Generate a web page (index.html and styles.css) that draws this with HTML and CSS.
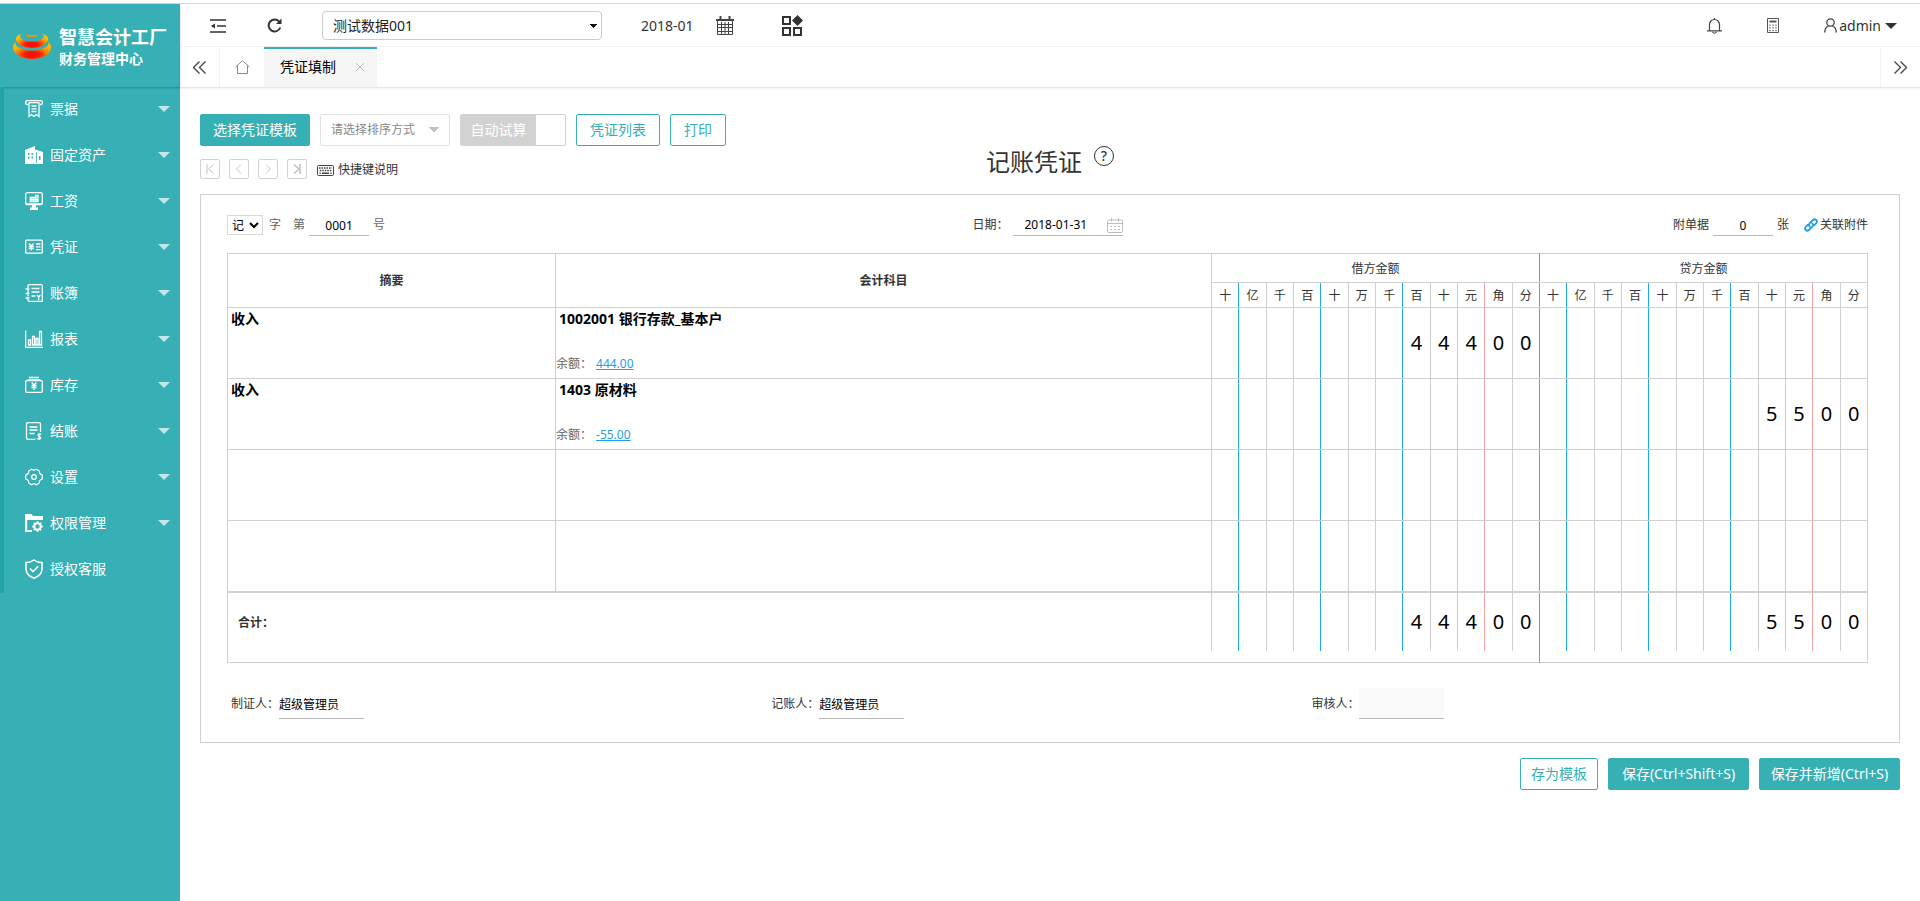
FILE: index.html
```html
<!DOCTYPE html>
<html lang="zh-CN">
<head>
<meta charset="utf-8">
<title>凭证填制</title>
<link rel="stylesheet" href="styles.css">
</head>
<body>
<div class="app">
  <aside class="sidebar">
    <div class="brand">
      <svg class="brand-mark" viewBox="0 0 38 26" aria-hidden="true">
        <defs>
          <radialGradient id="flame" cx="50%" cy="75%" r="55%">
            <stop offset="0" stop-color="#ff0800"/>
            <stop offset=".35" stop-color="#fa1606"/>
            <stop offset=".7" stop-color="#ff7400"/>
            <stop offset="1" stop-color="#ffb400"/>
          </radialGradient>
        </defs>
        <path fill="url(#flame)" d="M9 1C4 2 2 4 3 7c2 5 8 8 16 8s14-3 16-8c1-3-1-5-6-6 2 2 3 3 0 5-2 2-6 2.500-10 2.500S11 8 9 6C6 4 7 3 9 1z"/>
        <path fill="url(#flame)" d="M3 9c-3 2-4 5-2 9 3 5 10 8 18 8s15-3 18-8c2-4 1-7-2-9 1 4-1 5-4 6-3 2-8 2.500-12 2.500S10 17 7 15c-3-1-5-2-4-6z"/>
        <path fill="#ff8a10" d="M13 1c1 1 3 1 6 1s5 0 6-1v1.500c-1 1-3 1.500-6 1.500s-5-.5-6-1.500z"/>
      </svg>
      <div class="brand-text"><strong class="brand-name">智慧会计工厂</strong><span class="brand-sub">财务管理中心</span></div>
    </div>
    <nav class="menu">
      <a class="menu-item" href="#"><svg class="menu-icon" viewBox="0 0 18 18"><path d="M3 4.500H2Q.7 4.500.7 3V2Q.7.700 2 .700h14q1.300 0 1.300 1.300v1q0 1.500-1.300 1.500h-1M3.500 2.700h11M4 3v13.500l2.500-2 2.500 2 2.500-2 2.500 2V3M6.500 6h5M6.500 8.800h5M6.500 11.500h5"/></svg><span>票据</span><i class="caret"></i></a>
      <a class="menu-item" href="#"><svg class="menu-icon" viewBox="0 0 18 18"><path class="solid" fill-rule="evenodd" d="M0 4L10 0v3.500L18 6v12H0zM3 7v2h1.500V7zm3.500 0v2H8V7zM3 10.500v2h1.500v-2zm3.500 0v2H8v-2zM11 6v11h.8V6zm3 4v4h1.500v-4z"/></svg><span>固定资产</span><i class="caret"></i></a>
      <a class="menu-item" href="#"><svg class="menu-icon" viewBox="0 0 18 18"><rect x=".7" y=".7" width="16.600" height="12" rx="1.500"/><path d="M1 12h16M4.500 9.500h9M4.500 7.500h9M4.500 5.500h7M6 5v5M8.500 5v5M11 3v7M10 3.500h3v6"/><path class="solid" d="M7 13h4v2.500h2V18H5v-2.500h2z"/></svg><span>工资</span><i class="caret"></i></a>
      <a class="menu-item" href="#"><svg class="menu-icon" viewBox="0 0 18 18"><rect x=".7" y="2.200" width="16.600" height="13" rx="1"/><path d="M4 5.500L6.200 8 8.500 5.500M3.800 8.500h5M3.800 10.500h5M6.200 8v4.500M11 6h4.500M11 8.800h4.500M11 11.700h4.500"/></svg><span>凭证</span><i class="caret"></i></a>
      <a class="menu-item" href="#"><svg class="menu-icon" viewBox="0 0 18 18"><path d="M3 4V2.200Q3 .700 4.500.700H16q1.300 0 1.300 1.500V17.300H4.500Q3 17.300 3 16v-1M3 6v3M3 10.500v2M.5 5h4M.5 9.500h4M.5 14h4M6.500 4.500h8M6.500 8h8M6.500 12h4M12 11l1.700 2 1.700-2M13.700 13v3"/></svg><span>账簿</span><i class="caret"></i></a>
      <a class="menu-item" href="#"><svg class="menu-icon" viewBox="0 0 18 18"><path d="M.7.500v16.800H18M3.500 15v-5h2v5zM7.500 15V6.500h2V15zM11 15V8.500h2V15zM14.500 15V1.500h2V15z"/></svg><span>报表</span><i class="caret"></i></a>
      <a class="menu-item" href="#"><svg class="menu-icon" viewBox="0 0 18 18"><path d="M4 1.500h10M2.500 4h13"/><rect x=".7" y="4.700" width="16.600" height="11.600" rx="1"/><path d="M6.700 6.500L9 9l2.300-2.500M6.500 9.500h5M6.500 11.500h5M9 9v5"/></svg><span>库存</span><i class="caret"></i></a>
      <a class="menu-item" href="#"><svg class="menu-icon" viewBox="0 0 18 18"><path d="M10.500 17.300H3Q1.500 17.300 1.500 16V2Q1.500.700 3 .700h11Q15.500.700 15.500 2v8M4.500 5h8M4.500 8h8M4.500 11.500h5M16.300 12.500q-1-.8-2.300-.4c-1.500.6-.8 2 .4 2.400 1.800.6 1.700 2.600-.3 2.700q-1.300 0-2.100-.8M14.200 11v7"/></svg><span>结账</span><i class="caret"></i></a>
      <a class="menu-item" href="#"><svg class="menu-icon" viewBox="0 0 18 18"><path d="M6.500 1.200Q9 3 11.500 1.200L14.300 3Q14 6 17.300 7v4Q14 12 14.300 15l-2.800 1.800Q9 15 6.500 16.800L3.700 15Q4 12 .7 11V7Q4 6 3.700 3z"/><circle cx="9" cy="9" r="2.300"/></svg><span>设置</span><i class="caret"></i></a>
      <a class="menu-item" href="#"><svg class="menu-icon" viewBox="0 0 18 18"><path class="solid" d="M0 0h6.500L8 2h10v4H2.200v10H7v2H0z"/><circle cx="12.500" cy="12.500" r="3.200" stroke-width="2"/><path stroke-width="2" d="M12.500 7.300v2M12.500 15.700v2M7.300 12.500h2M15.700 12.500h2M8.900 8.900l1.400 1.400M16.100 8.900l-1.400 1.400M8.900 16.100l1.400-1.400M16.100 16.100l-1.400-1.400"/></svg><span>权限管理</span><i class="caret"></i></a>
      <a class="menu-item" href="#"><svg class="menu-icon menu-icon-tall" viewBox="0 0 18 20"><path stroke-width="1.600" d="M9 1Q12 3.500 17 3.500V10q0 6-8 9.200Q1 16 1 10V3.500Q6 3.500 9 1zM5 9.500l3 3.200 5.200-5.500"/></svg><span>授权客服</span></a>
    </nav>
  </aside>

  <div class="main">
    <header class="topbar">
      <button class="icon-btn top-fold" aria-label="收起菜单"><svg width="16" height="14" viewBox="0 0 16 14"><path fill="none" stroke="#333" stroke-width="1.600" d="M0 1h16M7 7h9M0 13h16M2 7h3"/><path fill="#333" d="M1 7l4-2.500v5z"/></svg></button>
      <button class="icon-btn top-refresh" aria-label="刷新"><svg width="15" height="15" viewBox="0 0 15 15"><path fill="none" stroke="#333" stroke-width="2" d="M12.500 4A6 6 0 1 0 13.300 9.500"/><path fill="#333" d="M14.500.500V6H9z"/></svg></button>
      <select class="book-select" aria-label="账套"><option>测试数据001</option></select>
      <span class="period">2018-01</span>
      <button class="icon-btn top-cal" aria-label="选择期间"><svg width="18" height="20" viewBox="0 0 18 20" fill="none" stroke="#444"><path stroke-width="2" d="M0 4h18M4.500 0v5M13.500 0v5"/><path d="M1.500 4v14.500h15V4M5.500 6v12M9 6v12M12.500 6v12M2 8.500h14M2 11.500h14M2 15.500h14"/></svg></button>
      <button class="icon-btn" aria-label="应用"><svg width="21" height="21" viewBox="0 0 21 21" fill="none" stroke="#333" stroke-width="2"><path d="M1 2h7v7H1zM1 13h7v7H1zM12 13h7v7h-7z"/><path fill="#333" stroke="none" d="M15.500 0L21 5.500 15.500 11 10 5.500z"/></svg></button>
      <div class="top-right">
        <button class="icon-btn" aria-label="通知"><svg width="15" height="16" viewBox="0 0 15 16" fill="none" stroke="#444" stroke-width="1.200"><path d="M2.500 12.500V6.500a5 5 0 0 1 10 0v6M0 12.800h15M5.500 14q2 2.500 4 0M7.500 0v1.500"/></svg></button>
        <button class="icon-btn" aria-label="计算器"><svg width="12" height="15" viewBox="0 0 12 15" fill="none" stroke="#555"><path d="M.5.500h11v14H.5z"/><path stroke-width="2" d="M2.500 3.500h7"/><path stroke-width="1.300" stroke-dasharray="1.300 1.400" d="M3 6.500v7M6 6.500v7M9 6.500v7"/></svg></button>
        <button class="user"><svg width="13" height="15" viewBox="0 0 13 15" fill="none" stroke="#444" stroke-width="1.300"><circle cx="6.500" cy="4.500" r="3.700"/><path d="M.7 14.500q0-5 4-6.500M12.300 14.500q0-5-4-6.500"/></svg><span>admin</span><i class="caret caret-dark"></i></button>
      </div>
    </header>

    <div class="tabs">
      <button class="tab-nav" aria-label="向左"><svg width="13" height="13" viewBox="0 0 13 13" fill="none" stroke="#444" stroke-width="1.300"><path d="M6.500.500l-6 6 6 6M12.500.500l-6 6 6 6"/></svg></button>
      <button class="tab-home" aria-label="首页"><svg width="15" height="14" viewBox="0 0 15 14" fill="none" stroke="#888"><path d="M.5 7l7-6.300 7 6.300M2.500 5.500v8h10v-8"/></svg></button>
      <div class="tab"><span>凭证填制</span><button class="tab-close" aria-label="关闭"><svg width="8" height="8" viewBox="0 0 8 8" stroke="#bbb"><path d="M0 0l8 8M8 0L0 8"/></svg></button></div>
      <button class="tab-nav tab-nav-right" aria-label="向右"><svg width="13" height="13" viewBox="0 0 13 13" fill="none" stroke="#444" stroke-width="1.300"><path d="M.5.500l6 6-6 6M6.500.500l6 6-6 6"/></svg></button>
    </div>

    <main class="page">
      <div class="toolbar">
        <button class="btn btn-solid">选择凭证模板</button>
        <select class="sort-select" aria-label="排序方式"><option>请选择排序方式</option></select>
        <button class="switch" role="switch" aria-checked="false"><span>自动试算</span></button>
        <button class="btn">凭证列表</button>
        <button class="btn">打印</button>
      </div>

      <div class="heading">
        <div class="pager">
          <button class="page-btn" aria-label="第一张"><svg viewBox="0 0 10 10"><path d="M2 0v10M8.500.500L3.500 5l5 4.500"/></svg></button>
          <button class="page-btn" aria-label="上一张"><svg viewBox="0 0 10 10"><path d="M7 .500L2.500 5 7 9.500"/></svg></button>
          <button class="page-btn" aria-label="下一张"><svg viewBox="0 0 10 10"><path d="M3 .500L7.500 5 3 9.500"/></svg></button>
          <button class="page-btn" aria-label="最后一张"><svg viewBox="0 0 10 10"><path stroke-width="1.600" d="M8 0v10M2 .500L7 5 2 9.500"/></svg></button>
          <a class="shortcut" href="#"><svg width="17" height="11" viewBox="0 0 17 11" fill="none" stroke="#444"><rect x=".5" y=".5" width="16" height="10" rx="1"/><path stroke-dasharray="1.500 1" stroke-width="1.500" d="M2 3h13M2.800 5.500h12"/><path stroke-width="1.500" d="M5 8.200h7M2.500 8.200h1.200M13.300 8.200h1.200"/></svg>快捷键说明</a>
        </div>
        <h1 class="title">记账凭证<button class="help" aria-label="帮助">?</button></h1>
      </div>

      <section class="voucher">
        <div class="voucher-head">
          <div class="field-row">
            <select class="word-select" aria-label="凭证字"><option>记</option></select>
            <span class="gray word-label">字</span>
            <label class="gray" for="no">第</label>
            <input class="line-input number" id="no" value="0001">
            <span class="gray">号</span>
          </div>
          <div class="field-row">
            <label for="date">日期：</label>
            <span class="date-box"><input class="date-input" id="date" value="2018-01-31"><svg width="16" height="15" viewBox="0 0 16 15" fill="none" stroke="#bbb"><rect x=".5" y="2" width="15" height="12.500" rx="1.500"/><path d="M.5 5.500h15M4.500 0v3.500M11.500 0v3.500"/><path stroke-dasharray="2 2" d="M3 8.500h11M3 11.500h11"/></svg></span>
          </div>
          <div class="field-row field-right">
            <label for="att">附单据</label>
            <input class="line-input number" id="att" value="0">
            <span>张</span>
            <a class="attach" href="#"><svg width="14" height="14" viewBox="0 0 14 14" fill="none" stroke="#1e9fe8" stroke-width="1.800" stroke-linecap="round"><path d="M5.800 8.600q-1.600-1.700 0-3.400L9 2q1.700-1.500 3.200 0t0 3.200L10.300 7.200M8.200 5.400q1.600 1.700 0 3.400L5 12q-1.700 1.500-3.200 0t0-3.200L3.700 6.800"/></svg>关联附件</a>
          </div>
        </div>

        <table class="grid">
          <colgroup>
            <col class="c-summary"><col class="c-account">
            <col class="d b"><col class="d"><col class="d"><col class="d b"><col class="d"><col class="d"><col class="d b"><col class="d"><col class="d"><col class="d r"><col class="d"><col class="d g">
            <col class="d b"><col class="d"><col class="d"><col class="d b"><col class="d"><col class="d"><col class="d b"><col class="d"><col class="d"><col class="d r"><col class="d"><col class="d">
          </colgroup>
          <thead>
            <tr class="row-group"><th rowspan="2">摘要</th><th rowspan="2">会计科目</th><th class="thin" colspan="12">借方金额</th><th class="thin" colspan="12">贷方金额</th></tr>
            <tr class="row-units"><th>十</th><th>亿</th><th>千</th><th>百</th><th>十</th><th>万</th><th>千</th><th>百</th><th>十</th><th>元</th><th>角</th><th>分</th><th>十</th><th>亿</th><th>千</th><th>百</th><th>十</th><th>万</th><th>千</th><th>百</th><th>十</th><th>元</th><th>角</th><th>分</th></tr>
          </thead>
          <tbody>
            <tr class="entry"><td class="summary">收入</td><td class="account"><div class="account-box"><strong>1002001 银行存款_基本户</strong><span class="balance">余额：<a href="#">444.00</a></span></div></td><td></td><td></td><td></td><td></td><td></td><td></td><td></td><td>4</td><td>4</td><td>4</td><td>0</td><td>0</td><td></td><td></td><td></td><td></td><td></td><td></td><td></td><td></td><td></td><td></td><td></td><td></td></tr>
            <tr class="entry"><td class="summary">收入</td><td class="account"><div class="account-box"><strong>1403 原材料</strong><span class="balance">余额：<a href="#">-55.00</a></span></div></td><td></td><td></td><td></td><td></td><td></td><td></td><td></td><td></td><td></td><td></td><td></td><td></td><td></td><td></td><td></td><td></td><td></td><td></td><td></td><td></td><td>5</td><td>5</td><td>0</td><td>0</td></tr>
            <tr class="entry"><td></td><td></td><td></td><td></td><td></td><td></td><td></td><td></td><td></td><td></td><td></td><td></td><td></td><td></td><td></td><td></td><td></td><td></td><td></td><td></td><td></td><td></td><td></td><td></td><td></td><td></td></tr>
            <tr class="entry"><td></td><td></td><td></td><td></td><td></td><td></td><td></td><td></td><td></td><td></td><td></td><td></td><td></td><td></td><td></td><td></td><td></td><td></td><td></td><td></td><td></td><td></td><td></td><td></td><td></td><td></td></tr>
          </tbody>
          <tfoot>
            <tr class="total"><th colspan="2" scope="row">合计：</th><td></td><td></td><td></td><td></td><td></td><td></td><td></td><td>4</td><td>4</td><td>4</td><td>0</td><td>0</td><td></td><td></td><td></td><td></td><td></td><td></td><td></td><td></td><td>5</td><td>5</td><td>0</td><td>0</td></tr>
            <tr class="total-end"><td class="open" colspan="14"></td><td colspan="12"></td></tr>
          </tfoot>
        </table>

        <div class="signers">
          <div class="signer"><label for="maker">制证人：</label><input id="maker" class="sign-input" value="超级管理员"></div>
          <div class="signer"><label for="booker">记账人：</label><input id="booker" class="sign-input" value="超级管理员"></div>
          <div class="signer"><label for="auditor">审核人：</label><input id="auditor" class="sign-input sign-empty" disabled></div>
        </div>
      </section>

      <div class="actions">
        <button class="btn">存为模板</button>
        <button class="btn btn-solid btn-wide">保存(Ctrl+Shift+S)</button>
        <button class="btn btn-solid btn-wide">保存并新增(Ctrl+S)</button>
      </div>
    </main>
  </div>
</div>
</body>
</html>
```

FILE: styles.css
```css
:root {
  --teal: #36b0b4;
  --line: #d0d0d0;
}
* { box-sizing: border-box; }
body {
  margin: 0;
  font: 14px/20px "Noto Sans", "Noto Sans CJK SC", sans-serif;
  color: #333;
  background: #fff;
}
button, input, select { font: inherit; color: inherit; margin: 0; }
button { cursor: pointer; }
a { color: inherit; text-decoration: none; }
svg { display: block; flex: none; }

.app {
  display: flex;
  min-height: 100vh;
  padding-top: 3px;
  background: linear-gradient(#d8d8d8, #d8d8d8) 0 3px / 100% 1px no-repeat;
}

/* sidebar */
.sidebar { flex: none; width: 180px; margin-top: 1px; background: var(--teal); color: #fff; }
.brand {
  display: flex;
  align-items: center;
  gap: 8px;
  height: 83px;
  padding-left: 13px;
  box-shadow: 0 1px 2px rgba(0, 0, 0, .25);
}
.brand-mark { width: 38px; height: 26px; }
.brand-text { display: flex; flex-direction: column; padding-top: 2px; }
.brand-name { font-size: 18px; line-height: 24px; }
.brand-sub { font-weight: bold; line-height: 20px; }
.menu { border-left: 4px solid #20a2a6; }
.menu-item {
  display: flex;
  align-items: center;
  gap: 7px;
  height: 46px;
  padding: 0 10px 2px 21px;
}
.menu-icon { width: 18px; height: 18px; fill: none; stroke: #fff; stroke-width: 1.3; }
.menu-icon-tall { height: 20px; }
.menu-icon .solid { fill: #fff; stroke: none; }
.caret {
  margin-left: auto;
  border: 6px solid transparent;
  border-top-color: rgba(255, 255, 255, .7);
  border-bottom: 0;
}

/* top bar */
.main { flex: 1; min-width: 0; }
.topbar {
  display: flex;
  align-items: center;
  height: 44px;
  padding: 2px 23px 0 30px;
  border-bottom: 1px solid #f2f2f2;
}
.icon-btn { padding: 0; border: 0; background: none; }
.top-fold { margin-right: 41px; }
.top-refresh { margin-right: 40px; }
.book-select {
  width: 280px;
  height: 29px;
  padding: 0 10px;
  appearance: none;
  border: 1px solid #ccc;
  border-radius: 4px;
  color: #222;
  background-color: #fff;
  background-image: linear-gradient(to bottom left, #111 50%, transparent 50%), linear-gradient(to bottom right, #111 50%, transparent 50%);
  background-position: right 7px center, right 3px center;
  background-size: 4px 4px;
  background-repeat: no-repeat;
}
.period { margin: 0 22px 0 39px; }
.top-cal { margin-right: 48px; }
.top-right { display: flex; align-items: center; gap: 45px; margin-left: auto; }
.user { display: flex; align-items: center; gap: 2px; padding: 0; border: 0; background: none; }
.caret-dark { margin-left: 2px; border-top-color: #333; }

/* tabs */
.tabs {
  display: flex;
  height: 41px;
  border-bottom: 1px solid #e6e6e6;
  box-shadow: 0 1px 2px rgba(0, 0, 0, .06);
}
.tab-nav, .tab-home {
  display: flex;
  align-items: center;
  justify-content: center;
  width: 40px;
  padding: 0;
  border: 0;
  background: none;
}
.tab-nav { border-right: 1px solid #f2f2f2; }
.tab-home { width: 44px; }
.tab-nav-right { margin-left: auto; border-right: 0; border-left: 1px solid #f2f2f2; }
.tab {
  display: flex;
  align-items: center;
  gap: 20px;
  padding: 0 13px 2px 16px;
  border-top: 2px solid var(--teal);
  background: #f6f6f6;
  color: #000;
}
.tab-close { padding: 0; border: 0; background: none; }

/* page */
.page { padding: 26px 20px 20px; }
.toolbar { display: flex; gap: 10px; }
.btn {
  height: 32px;
  padding: 0 12px;
  border: 1px solid var(--teal);
  border-radius: 2px;
  background: #fff;
  color: var(--teal);
  white-space: nowrap;
}
.btn-solid { background: var(--teal); color: #fff; }
.toolbar .btn { padding: 0 13px; }
.toolbar .btn-solid { padding: 0 12px; }
.sort-select {
  width: 130px;
  padding: 0 10px;
  appearance: none;
  border: 1px solid #e2e2e2;
  border-radius: 2px;
  font-size: 12px;
  color: #888;
  background-color: #fff;
  background-image: linear-gradient(to bottom left, #c2c2c2 50%, transparent 50%), linear-gradient(to bottom right, #c2c2c2 50%, transparent 50%);
  background-position: right 15px center, right 9px center;
  background-size: 6px 6px;
  background-repeat: no-repeat;
}
.switch {
  display: flex;
  width: 106px;
  height: 32px;
  padding: 0;
  border: 1px solid #d2d2d2;
  border-radius: 2px;
  background: #fff;
  color: #fff;
}
.switch span { width: 75px; line-height: 30px; background: #d2d2d2; }

.heading {
  display: grid;
  grid-template-columns: 1fr auto 1fr;
  height: 48px;
}
.pager { display: flex; align-items: center; gap: 9px; height: 20px; margin-top: 13px; }
.page-btn {
  display: flex;
  align-items: center;
  justify-content: center;
  width: 20px;
  height: 20px;
  padding: 0;
  border: 1px solid #d2d2d2;
  border-radius: 2px;
  background: #fff;
}
.page-btn svg { width: 10px; height: 10px; fill: none; stroke: #c4c4c4; }
.shortcut { display: flex; align-items: center; gap: 4px; padding: 2px 0 0 1px; font-size: 12px; }
.title {
  display: flex;
  gap: 12px;
  margin: 0;
  font-size: 24px;
  line-height: 32px;
  font-weight: normal;
}
.help {
  width: 20px;
  height: 20px;
  padding: 0;
  border: 1px solid #333;
  border-radius: 50%;
  background: #fff;
  font-size: 14px;
  line-height: 18px;
  font-weight: 500;
}

/* voucher sheet */
.voucher {
  padding: 18px 31px 23px 26px;
  border: 1px solid var(--line);
  font-size: 12px;
}
.voucher-head {
  display: grid;
  grid-template-columns: 1fr auto 1fr;
  height: 40px;
}
.field-row { display: flex; align-items: center; gap: 4px; height: 23px; }
.field-right { justify-content: flex-end; }
.gray { color: #666; }
.word-select {
  width: 36px;
  height: 20px;
  padding: 0;
  border: 1px solid #d8d8d8;
  background: #fff;
  color: #000;
}
.word-label { margin: 0 8px 0 2px; }
.line-input, .date-box {
  width: 60px;
  height: 23px;
  padding: 2px 0 0;
  border: 0;
  border-bottom: 1px solid #b8b8b8;
  background: none;
  color: #000;
}
.number { text-align: center; }
.date-box { display: flex; align-items: center; width: 110px; }
.date-input { flex: 1; min-width: 0; padding: 0 0 0 12px; border: 0; background: none; }
.attach { display: flex; align-items: center; gap: 2px; margin-left: 11px; }

.grid {
  width: 100%;
  table-layout: fixed;
  border-collapse: collapse;
  border: 1px solid var(--line);
}
.grid th, .grid td { padding: 0; }
.c-summary { width: 20%; border-right: 1px solid var(--line); }
.c-account { width: 40%; border-right: 1px solid var(--line); }
.d { border-right: 1px solid var(--line); }
.d.b { border-right-color: #1eaaf1; }
.d.r { border-right-color: #f2a0a0; }
.d.g { border-right-color: #5fb878; }
.grid tr { border-bottom: 1px solid var(--line); }
.row-group { height: 29px; }
.row-units { height: 25px; }
.grid .thin, .row-units th { padding-top: 2px; font-weight: normal; border-bottom: 1px solid var(--line); }
.entry { height: 71px; }
.entry td, .total td { font-size: 20px; text-align: center; color: #000; }
.grid .entry .summary {
  padding: 1px 3px;
  font-size: 14px;
  font-weight: bold;
  text-align: left;
  vertical-align: top;
}
.grid .entry .account { font-size: 14px; text-align: left; vertical-align: top; }
.account-box { display: flex; flex-direction: column; justify-content: space-between; height: 66px; padding-top: 1px; }
.account-box strong { padding-left: 3px; }
.balance { font-size: 12px; color: #666; }
.balance a { margin-left: 4px; color: #1e9fe8; text-decoration: underline; }
.grid .total { height: 59px; border-top: 2px solid var(--line); border-bottom: 0; }
.grid .total th { padding: 2px 0 0 10px; text-align: left; }
.total-end { height: 12px; }
.grid .open { border-right: 1px solid #5fb878; }

.signers { display: grid; grid-template-columns: repeat(3, 33%); padding: 25px 0 0 4px; }
.signer { display: flex; align-items: center; }
.sign-input {
  width: 85px;
  height: 31px;
  padding: 2px 0 0;
  border: 0;
  border-bottom: 1px solid #b8b8b8;
  background: none;
  color: #000;
}
.sign-empty { background: #fafafa; }

.actions { display: flex; justify-content: flex-end; gap: 10px; padding-top: 15px; }
.actions .btn { padding: 0 10px; }
.btn-wide { min-width: 141px; }
```
